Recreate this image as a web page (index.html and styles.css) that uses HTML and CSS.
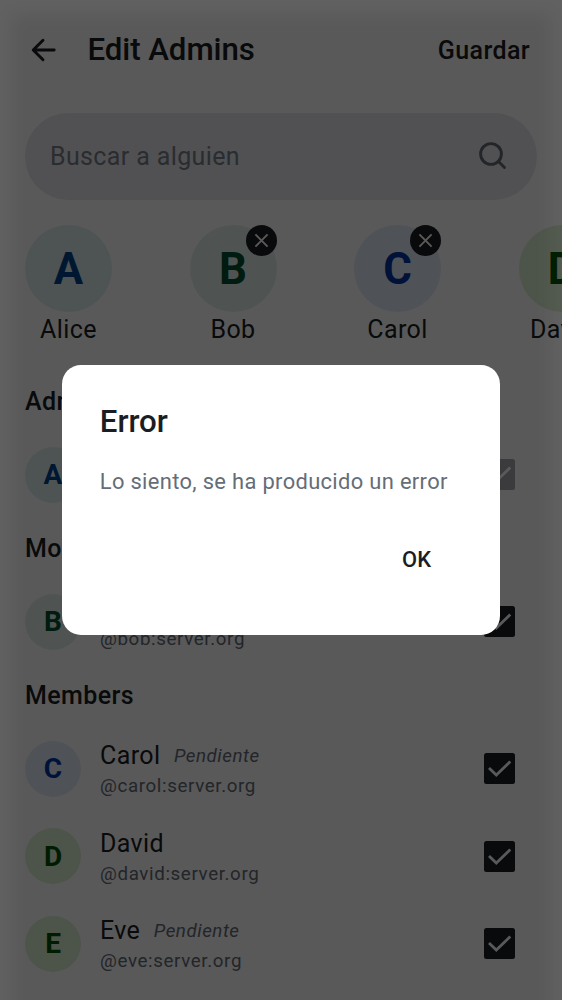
FILE: index.html
```html
<!DOCTYPE html>
<html lang="es">
<head>
<meta charset="utf-8">
<title>Edit Admins</title>
<link rel="stylesheet" href="styles.css">
</head>
<body>
<svg class="defs" width="0" height="0" aria-hidden="true">
  <symbol id="check" viewBox="0 0 31 31"><rect width="31" height="31" rx="2.5" fill="currentColor"/><path d="M5 15 12.3 22.1 26.3 8.5" fill="none" stroke="#fff" stroke-width="2.8"/></symbol>
  <symbol id="close" viewBox="0 0 31 31"><circle cx="15.5" cy="15.5" r="15.5" fill="#1b1d22"/><path d="M9.4 9.4 21.6 21.6M21.6 9.4 9.4 21.6" fill="none" stroke="#fff" stroke-width="2"/></symbol>
</svg>
<div class="screen">
  <header class="topbar">
    <svg class="back" viewBox="0 0 26 26"><path d="M23.2 13H2.5M12 3.2 2.2 13l9.8 9.8" fill="none" stroke="currentColor" stroke-width="2.9" stroke-linecap="round" stroke-linejoin="round"/></svg>
    <h1 class="title">Edit Admins</h1>
    <span class="save">Guardar</span>
  </header>
  <div class="search">
    <span class="placeholder">Buscar a alguien</span>
    <svg class="lens" viewBox="0 0 30 30"><circle cx="13" cy="13" r="10.4" fill="none" stroke="currentColor" stroke-width="2.9"/><path d="m20.5 20.5 6 6" fill="none" stroke="currentColor" stroke-width="2.9" stroke-linecap="round"/></svg>
  </div>
  <div class="selected">
    <div class="person"><div class="avatar large tone-a">A</div><span>Alice</span></div>
    <div class="person"><div class="avatar large tone-b">B</div><svg class="remove"><use href="#close"/></svg><span>Bob</span></div>
    <div class="person"><div class="avatar large tone-c">C</div><svg class="remove"><use href="#close"/></svg><span>Carol</span></div>
    <div class="person"><div class="avatar large tone-d">D</div><svg class="remove"><use href="#close"/></svg><span>David</span></div>
  </div>
  <main class="list">
    <h2 class="section">Admins</h2>
    <div class="row"><div class="avatar tone-a">A</div><div class="info"></div><svg class="box disabled"><use href="#check"/></svg></div>
    <h2 class="section">Moderators</h2>
    <div class="row"><div class="avatar tone-b">B</div><div class="info"><div class="name"></div><div class="handle">@bob:server.org</div></div><svg class="box"><use href="#check"/></svg></div>
    <h2 class="section">Members</h2>
    <div class="row"><div class="avatar tone-c">C</div><div class="info"><div class="name">Carol<em>Pendiente</em></div><div class="handle">@carol:server.org</div></div><svg class="box"><use href="#check"/></svg></div>
    <div class="row"><div class="avatar tone-d">D</div><div class="info"><div class="name">David</div><div class="handle">@david:server.org</div></div><svg class="box"><use href="#check"/></svg></div>
    <div class="row"><div class="avatar tone-d">E</div><div class="info"><div class="name">Eve<em>Pendiente</em></div><div class="handle">@eve:server.org</div></div><svg class="box"><use href="#check"/></svg></div>
  </main>
</div>
<div class="scrim">
  <div class="dialog">
    <h2 class="dialog-title">Error</h2>
    <p class="dialog-text">Lo siento, se ha producido un error</p>
    <div class="actions"><span class="ok">OK</span></div>
  </div>
</div>
</body>
</html>
```
FILE: styles.css
```css
* { box-sizing: border-box; }
body {
  margin: 0;
  width: 562px;
  height: 1000px;
  overflow: hidden;
  position: relative;
  background: #fff;
  color: #1b1d22;
  font-family: Roboto, sans-serif;
}
h1, h2, p { margin: 0; font-weight: 500; }
.defs { position: absolute; }
.screen { height: 1000px; overflow: hidden; }
.topbar {
  height: 100px;
  padding: 0 32px 0 31px;
  display: flex;
  align-items: center;
}
.back { width: 26px; height: 26px; margin-right: 30.5px; }
.title { flex: 1; font-size: 31.25px; line-height: 40px; letter-spacing: -0.08px; }
.save { font-size: 25px; font-weight: 500; letter-spacing: 0.4px; }
.search {
  height: 87.5px;
  margin: 12.5px 25px 0;
  padding: 0 29px 0 25px;
  border-radius: 44px;
  background: #e8e8ee;
  display: flex;
  align-items: center;
  justify-content: space-between;
}
.placeholder { font-size: 25px; letter-spacing: 0.37px; color: #7a818a; }
.lens { width: 30px; height: 30px; color: #656d77; }
.selected {
  display: flex;
  gap: 77.5px;
  padding: 25px 0 0 25px;
  height: 150px;
}
.person {
  position: relative;
  flex: none;
  width: 87px;
  display: flex;
  flex-direction: column;
  align-items: center;
  font-size: 25px;
  line-height: 36px;
  letter-spacing: 0.39px;
}
.remove { position: absolute; top: 0; right: 0; width: 31px; height: 31px; }
.avatar {
  flex: none;
  width: 56px;
  height: 56px;
  border-radius: 50%;
  display: flex;
  align-items: center;
  justify-content: center;
  font-size: 28px;
  font-weight: 700;
  letter-spacing: 0;
}
.large { width: 87px; height: 87px; font-size: 43.75px; }
.tone-a { background: #e0f1f1; color: #00458f; }
.tone-b { background: #e2f1ec; color: #004f2f; }
.tone-c { background: #e3ecf8; color: #0036a3; }
.tone-d { background: #def1d6; color: #005200; }
.list { padding: 21.7px 47px 0 25px; }
.section { height: 59.5px; font-size: 25px; line-height: 60px; letter-spacing: 0.39px; }
.row { height: 87.5px; display: flex; align-items: center; }
.info { flex: 1; margin-left: 19px; padding-top: 2px; }
.name { height: 34px; padding-top: 1px; font-size: 25px; line-height: 32px; letter-spacing: 0.39px; }
.name em { margin-left: 13.5px; font-size: 18.75px; line-height: 1; vertical-align: 2px; letter-spacing: 0.53px; color: #656d77; }
.handle { margin-top: -1px; font-size: 18.75px; line-height: 28px; letter-spacing: 0.62px; color: #656d77; }
.box { width: 31px; height: 31px; }
.disabled { color: #a9abb4; }
.scrim {
  position: absolute;
  inset: 0;
  overflow: hidden;
  display: flex;
  align-items: center;
  justify-content: center;
  background: rgba(0, 0, 0, 0.62);
}
/* Slightly denser shade away from the top and side edges */
.scrim::before {
  content: "";
  position: absolute;
  inset: 15px 12px -20px;
  background: rgba(0, 0, 0, 0.08);
  filter: blur(8px);
}
.dialog {
  position: relative;
  width: 437.5px;
  height: 270.5px;
  padding: 37.5px;
  border-radius: 19px;
  background: #fff;
}
.dialog-title { font-size: 31.25px; line-height: 40px; }
.dialog-text {
  margin-top: 23px;
  font-size: 21.9px;
  font-weight: 400;
  line-height: 34px;
  letter-spacing: 0.34px;
  color: #656d77;
  white-space: nowrap;
}
.actions { margin-top: 44px; padding-right: 31px; text-align: right; }
.ok { font-size: 21.9px; line-height: 34px; font-weight: 500; letter-spacing: 0.16px; }
```
